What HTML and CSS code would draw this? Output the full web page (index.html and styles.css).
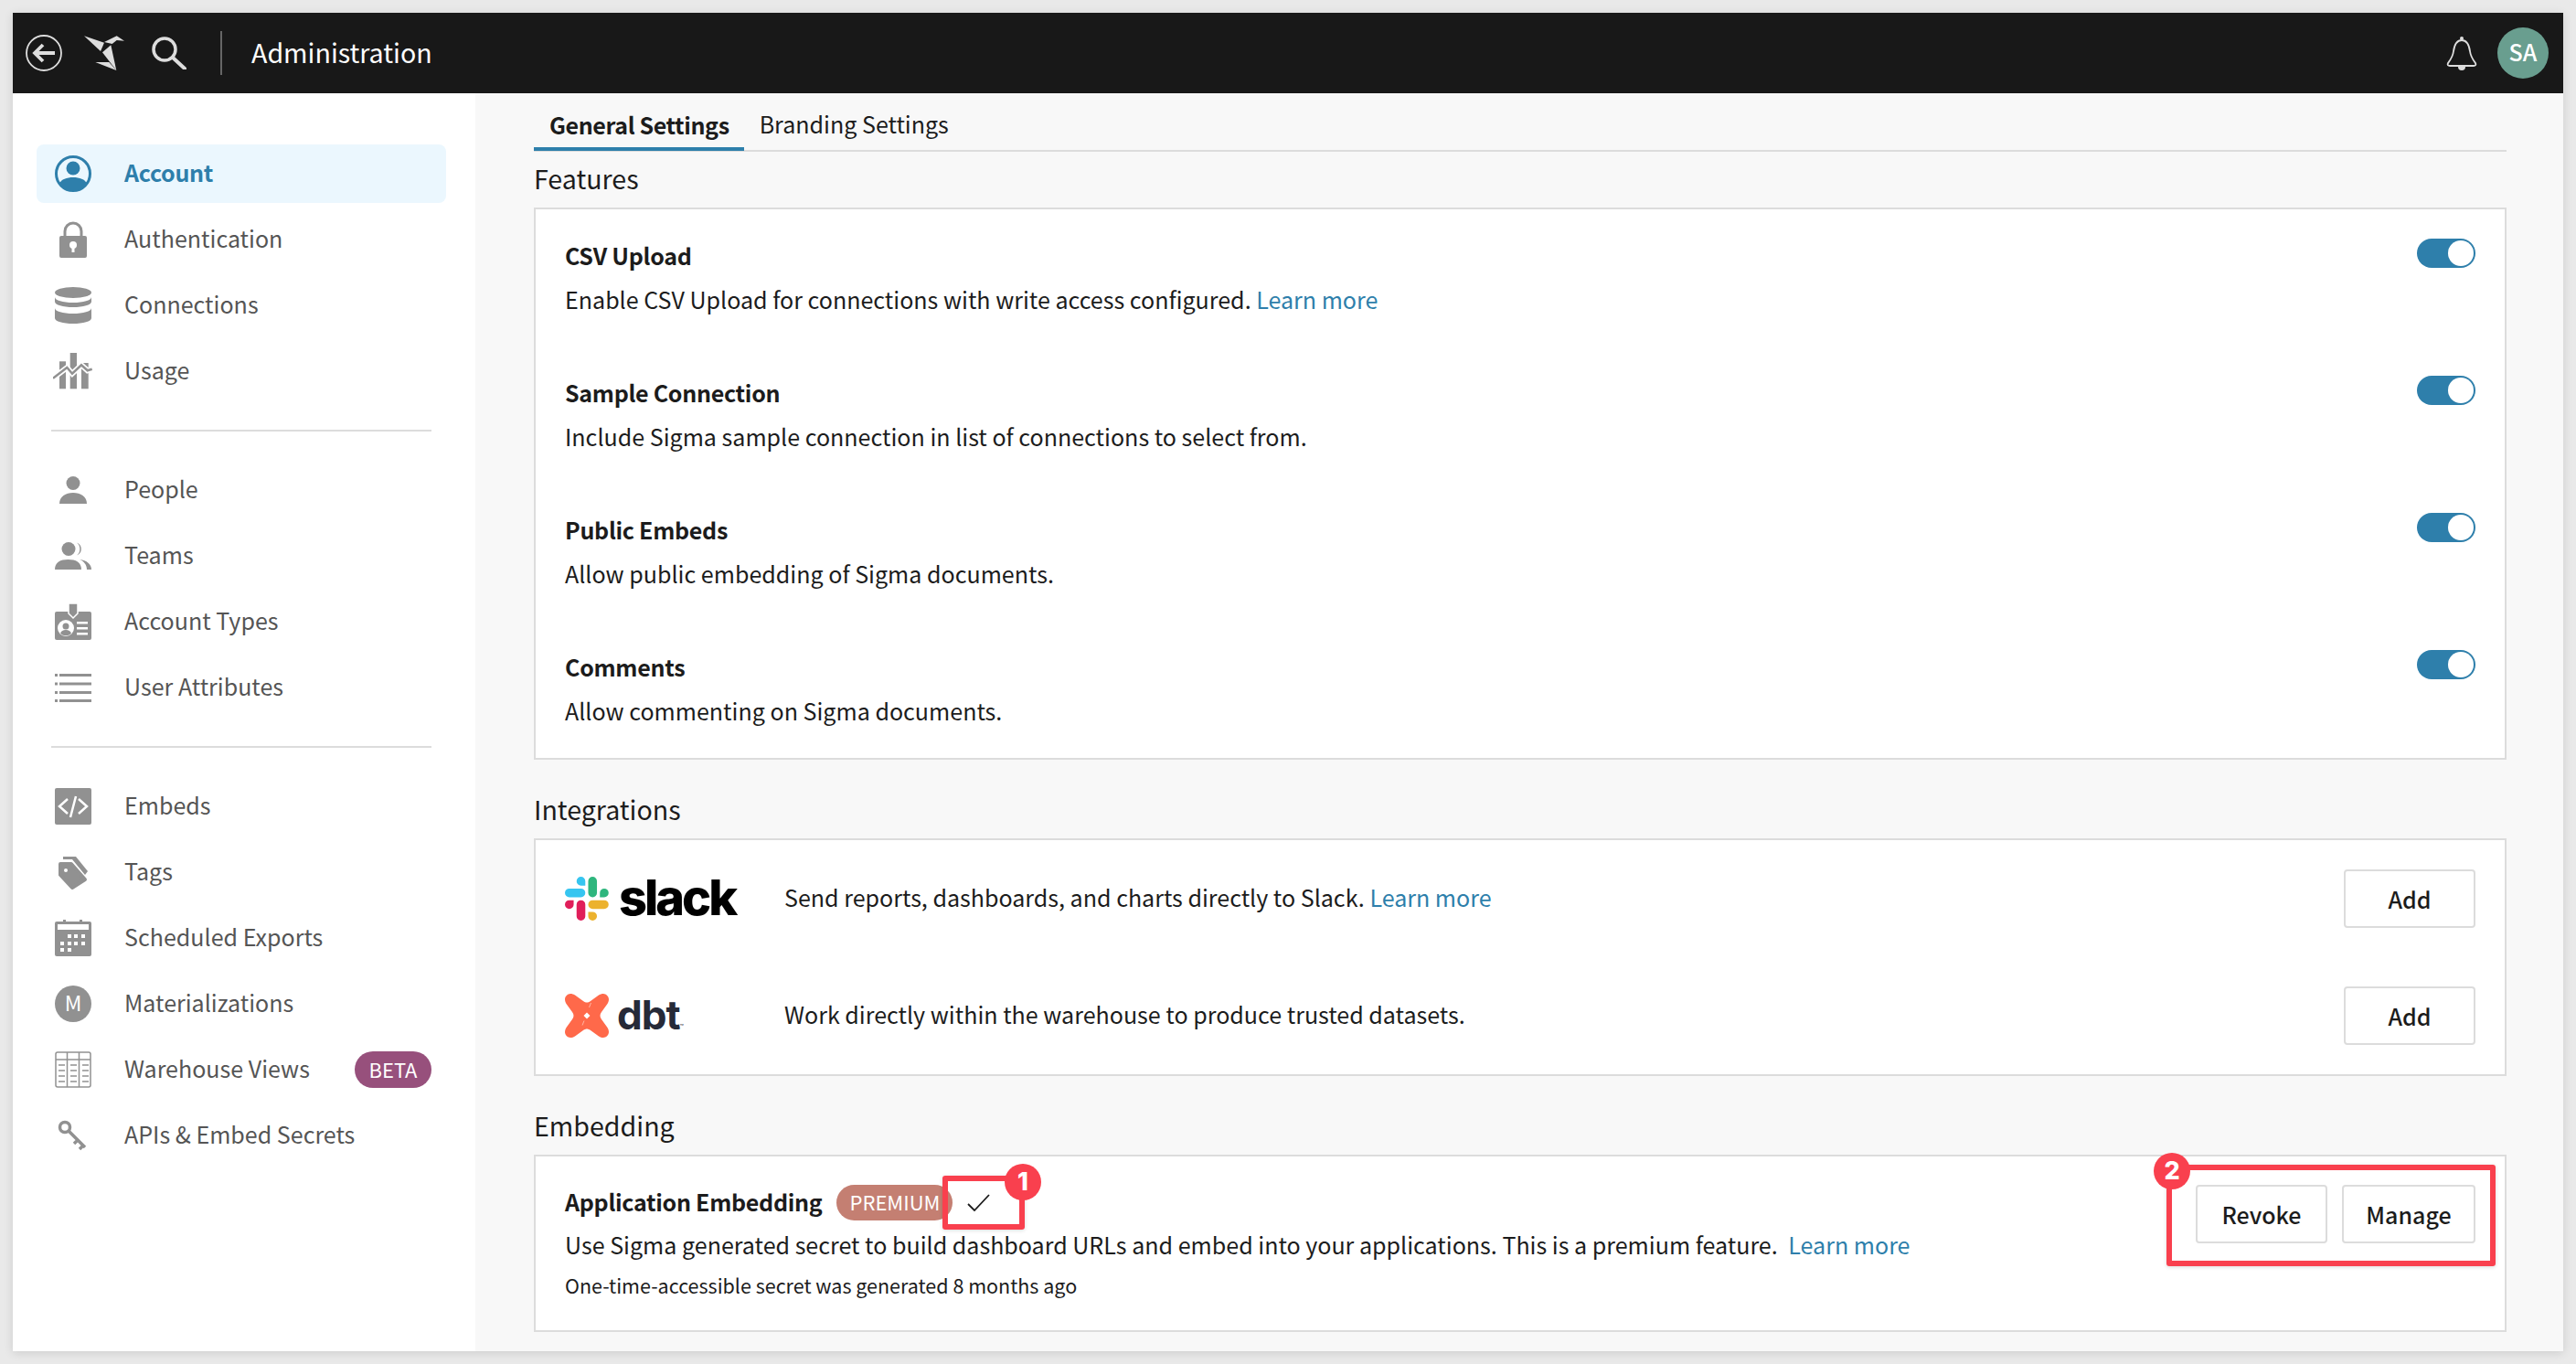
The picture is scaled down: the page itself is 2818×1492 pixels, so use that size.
FILE: index.html
```html
<!DOCTYPE html>
<html lang="en">
<head>
    <meta charset="UTF-8">
    <title>Administration</title>
    <link rel="stylesheet" href="styles.css">
</head>
<body>
<div class="window">
    <header class="topbar">
        <svg class="top-back" viewBox="0 0 40 40"><circle cx="20" cy="20" r="19" fill="none" stroke="#ddd" stroke-width="1.800"/><path d="M32 20H10M19 11l-9 9 9 9" fill="none" stroke="#ddd" stroke-width="3.800"/></svg>
        <svg class="top-logo" viewBox="0 0 44 38"><path d="M0 .3L22 7.700 18 17z" fill="#ddd"/><path d="M20 18.300L29.300 10.300 35.300 38z" fill="#ddd"/><path d="M22 7L35.700 .3 44 5.700 35.700 5 30.700 9z" fill="#ddd"/><path d="M12.300 29L27.300 29 35.300 38z" fill="#ddd"/></svg>
        <svg class="top-search" viewBox="0 0 38 36"><circle cx="14" cy="14" r="12" fill="none" stroke="#ddd" stroke-width="3.500"/><path d="M23 23l13 12" stroke="#ddd" stroke-width="4" stroke-linecap="round"/></svg>
        <span class="top-sep"></span>
        <span class="top-title">Administration</span>
        <svg class="top-bell" viewBox="0 0 34 40"><path d="M17 6c-6 0-8 5-9 12-.7 6-3 9-6 13-1 2 0 3 2 3h26c2 0 3-1 2-3-3-4-5.300-7-6-13-1-7-3-12-9-12z" fill="none" stroke="#ddd" stroke-width="1.800"/><circle cx="17" cy="4" r="2" fill="#ddd"/><path d="M13 35h8a4 4 0 0 1-8 0z" fill="#ddd"/></svg>
        <span class="avatar">SA</span>
    </header>
    <div class="content">
        <aside class="sidebar">
            <nav class="nav-group">
                <a class="nav-item active">
                    <svg class="nav-icon" viewBox="0 0 40 40"><circle cx="20" cy="20" r="18.500" fill="none" stroke="#2e7fab" stroke-width="3"/><circle cx="20" cy="14" r="7.500"/><path d="M5 31c2-5 8-7 15-7s13 2 15 7a19 19 0 0 1-30 0z"/></svg>
                    <span class="nav-label">Account</span>
                </a>
                <a class="nav-item">
                    <svg class="nav-icon" viewBox="0 0 40 40"><path d="M11 18v-7a9 9 0 0 1 18 0v7" fill="none" stroke="#919191" stroke-width="3"/><rect x="5" y="16" width="30" height="24" rx="2"/><circle cx="20" cy="26" r="4" fill="#fff"/><rect x="18.500" y="27" width="3" height="7" fill="#fff"/></svg>
                    <span class="nav-label">Authentication</span>
                </a>
                <a class="nav-item">
                    <svg class="nav-icon" viewBox="0 0 40 40"><ellipse cx="20" cy="6" rx="20" ry="6"/><path d="M0 11v5c0 3.500 9 6 20 6s20-2.500 20-6v-5c0 3.500-9 6-20 6S0 14.500 0 11z"/><path d="M0 23v11c0 3.500 9 6 20 6s20-2.500 20-6V23c0 3.500-9 6-20 6S0 26.500 0 23z"/></svg>
                    <span class="nav-label">Connections</span>
                </a>
                <a class="nav-item">
                    <svg class="nav-icon wide" viewBox="0 0 44 40"><rect x="7" y="9.300" width="7" height="30"/><rect x="18.700" width="7.300" height="39.300"/><rect x="31" y="11" width="7.700" height="28.300"/><path d="M0 27.700L15.300 16 21 22.700 31 13.300 37.700 19.300 42.700 17.700" fill="none" stroke="#fff" stroke-width="6"/><path d="M0 27.700L15.300 16 21 22.700 31 13.300 37.700 19.300 42.700 17.700" fill="none" stroke="#919191" stroke-width="2.500"/></svg>
                    <span class="nav-label">Usage</span>
                </a>
            </nav>
            <div class="nav-divider"></div>
            <nav class="nav-group">
                <a class="nav-item">
                    <svg class="nav-icon" viewBox="0 0 40 40"><circle cx="20" cy="12.500" r="7.500"/><path d="M5 35c0-8 7-12 15-12s15 4 15 12z"/></svg>
                    <span class="nav-label">People</span>
                </a>
                <a class="nav-item">
                    <svg class="nav-icon" viewBox="0 0 40 40"><circle cx="15" cy="12.500" r="7.500"/><path d="M0 35c0-8 6-11 14.500-11S29 27 29 35z"/><path d="M24 5.500a7.500 7.500 0 0 1 0 14 9 9 0 0 0 0-14z"/><path d="M27 24c8 1 13 5 13 11h-5c0-5-3-9-8-11z"/></svg>
                    <span class="nav-label">Teams</span>
                </a>
                <a class="nav-item">
                    <svg class="nav-icon" viewBox="0 0 40 40"><rect y="9" width="40" height="31" rx="2"/><path d="M15 0h10v11l-5 5-5-5z" stroke="#fff" stroke-width="1.500"/><circle cx="12" cy="27" r="9" fill="#fff"/><circle cx="12" cy="25" r="3.500"/><path d="M6 33c1-3 3-4 6-4s5 1 6 4a9 9 0 0 1-12 0z"/><rect x="24" y="20" width="12" height="2.500" fill="#fff"/><rect x="24" y="26" width="12" height="2.500" fill="#fff"/><rect x="24" y="32" width="12" height="2.500" fill="#fff"/></svg>
                    <span class="nav-label">Account Types</span>
                </a>
                <a class="nav-item">
                    <svg class="nav-icon" viewBox="0 0 40 40"><rect y="5" width="3" height="3"/><rect x="5" y="5" width="35" height="3"/><rect y="14.500" width="3" height="3"/><rect x="5" y="14.500" width="35" height="3"/><rect y="24" width="3" height="3"/><rect x="5" y="24" width="35" height="3"/><rect y="33" width="3" height="3"/><rect x="5" y="33" width="35" height="3"/></svg>
                    <span class="nav-label">User Attributes</span>
                </a>
            </nav>
            <div class="nav-divider"></div>
            <nav class="nav-group">
                <a class="nav-item">
                    <svg class="nav-icon" viewBox="0 0 40 40"><rect width="40" height="40" rx="2"/><path d="M14 12l-9 8 9 8M26 12l9 8-9 8M23 9l-6 23" fill="none" stroke="#fff" stroke-width="2.500"/></svg>
                    <span class="nav-label">Embeds</span>
                </a>
                <a class="nav-item">
                    <svg class="nav-icon" viewBox="0 0 40 40"><path d="M6 11h12l15 17-14 9L6 23z" stroke="#919191" stroke-width="4" stroke-linejoin="round"/><path d="M9 3h14l13 16-3 4-14-17H9z"/><circle cx="12" cy="18" r="2" fill="#fff"/></svg>
                    <span class="nav-label">Tags</span>
                </a>
                <a class="nav-item">
                    <svg class="nav-icon" viewBox="0 0 40 40"><rect x="9" width="3" height="4"/><rect x="27" width="3" height="4"/><rect y="2" width="40" height="38" rx="2"/><rect x="3" y="5" width="34" height="6" fill="#fff"/><g fill="#fff"><rect x="14" y="16" width="4" height="4"/><rect x="21" y="16" width="4" height="4"/><rect x="29" y="16" width="4" height="4"/><rect x="6" y="24" width="4" height="4"/><rect x="14" y="24" width="4" height="4"/><rect x="21" y="24" width="4" height="4"/><rect x="29" y="24" width="4" height="4"/><rect x="6" y="31" width="4" height="4"/><rect x="14" y="31" width="4" height="4"/></g></svg>
                    <span class="nav-label">Scheduled Exports</span>
                </a>
                <a class="nav-item">
                    <svg class="nav-icon" viewBox="0 0 40 40"><circle cx="20" cy="20" r="20"/><text x="20" y="28" class="icon-m" text-anchor="middle">M</text></svg>
                    <span class="nav-label">Materializations</span>
                </a>
                <a class="nav-item">
                    <svg class="nav-icon" viewBox="0 0 40 40"><rect x="1" y="1" width="38" height="38" rx="2" fill="none" stroke="#919191" stroke-width="1.500"/><path d="M1 9h38M13.500 1v38M26.500 1v38" fill="none" stroke="#919191" stroke-width="1.500"/><path d="M4 15h7M17 15h7M30 15h7M4 21h7M17 21h7M30 21h7M4 27h7M17 27h7M30 27h7M4 33h7M17 33h7M30 33h7" fill="none" stroke="#919191" stroke-width="1.500"/></svg>
                    <span class="nav-label">Warehouse Views</span>
                    <span class="beta">BETA</span>
                </a>
                <a class="nav-item">
                    <svg class="nav-icon" viewBox="0 0 40 40"><circle cx="11" cy="11" r="5.500" fill="none" stroke="#919191" stroke-width="3.500"/><path d="M15 15l18 18M25 25l-4 4M31 31l-4 4" fill="none" stroke="#919191" stroke-width="3.500"/></svg>
                    <span class="nav-label">APIs &amp; Embed Secrets</span>
                </a>
            </nav>
        </aside>

        <main class="main">
            <div class="tabs">
                <span class="tab current">General Settings</span>
                <span class="tab">Branding Settings</span>
            </div>

            <h2 class="section-title">Features</h2>
            <section class="card features">
                <div class="feature">
                    <div>
                        <div class="feature-name">CSV Upload</div>
                        <div class="feature-desc">Enable CSV Upload for connections with write access configured. <a class="link">Learn more</a></div>
                    </div>
                    <span class="toggle"></span>
                </div>
                <div class="feature">
                    <div>
                        <div class="feature-name">Sample Connection</div>
                        <div class="feature-desc">Include Sigma sample connection in list of connections to select from.</div>
                    </div>
                    <span class="toggle"></span>
                </div>
                <div class="feature">
                    <div>
                        <div class="feature-name">Public Embeds</div>
                        <div class="feature-desc">Allow public embedding of Sigma documents.</div>
                    </div>
                    <span class="toggle"></span>
                </div>
                <div class="feature">
                    <div>
                        <div class="feature-name">Comments</div>
                        <div class="feature-desc">Allow commenting on Sigma documents.</div>
                    </div>
                    <span class="toggle"></span>
                </div>
            </section>

            <h2 class="section-title spaced">Integrations</h2>
            <section class="card integrations">
                <div class="integration">
                    <div class="brand">
                        <svg class="brand-mark" viewBox="0 0 54 54">
                            <path d="M19.712.133a5.381 5.381 0 0 0-5.376 5.387 5.381 5.381 0 0 0 5.376 5.386h5.376V5.520A5.381 5.381 0 0 0 19.712.133m0 14.365H5.376A5.381 5.381 0 0 0 0 19.884a5.381 5.381 0 0 0 5.376 5.387h14.336a5.381 5.381 0 0 0 5.376-5.387 5.381 5.381 0 0 0-5.376-5.386" fill="#36C5F0"/>
                            <path d="M53.760 19.884a5.381 5.381 0 0 0-5.376-5.386 5.381 5.381 0 0 0-5.376 5.386v5.387h5.376a5.381 5.381 0 0 0 5.376-5.387m-14.336 0V5.520A5.381 5.381 0 0 0 34.048.133a5.381 5.381 0 0 0-5.376 5.387v14.364a5.381 5.381 0 0 0 5.376 5.387 5.381 5.381 0 0 0 5.376-5.387" fill="#2EB67D"/>
                            <path d="M34.048 54a5.381 5.381 0 0 0 5.376-5.387 5.381 5.381 0 0 0-5.376-5.386h-5.376v5.386A5.381 5.381 0 0 0 34.048 54m0-14.365h14.336a5.381 5.381 0 0 0 5.376-5.386 5.381 5.381 0 0 0-5.376-5.387H34.048a5.381 5.381 0 0 0-5.376 5.387 5.381 5.381 0 0 0 5.376 5.386" fill="#ECB22E"/>
                            <path d="M0 34.249a5.381 5.381 0 0 0 5.376 5.386 5.381 5.381 0 0 0 5.376-5.386v-5.387H5.376A5.381 5.381 0 0 0 0 34.250m14.336-.001v14.364A5.381 5.381 0 0 0 19.712 54a5.381 5.381 0 0 0 5.376-5.387V34.250a5.381 5.381 0 0 0-5.376-5.387 5.381 5.381 0 0 0-5.376 5.387" fill="#E01E5A"/>
                        </svg>
                        <span class="slack-word">slack</span>
                    </div>
                    <div class="integration-desc">Send reports, dashboards, and charts directly to Slack. <a class="link">Learn more</a></div>
                    <button class="btn">Add</button>
                </div>
                <div class="integration">
                    <div class="brand">
                        <svg class="brand-mark" viewBox="0 0 48 48">
                            <path d="M6 0c2 0 3 .5 5 1.500l9 6.500c3 2 5 2 8 0l9-6.500c2-1 3-1.500 5-1.500 3 0 6 3 6 6 0 2-.5 3-1.500 5l-6.500 9c-2 3-2 5 0 8l6.500 9c1 2 1.500 3 1.500 5 0 3-3 6-6 6-2 0-3-.5-5-1.500l-9-6.500c-3-2-5-2-8 0l-9 6.500c-2 1-3 1.500-5 1.500-3 0-6-3-6-6 0-2 .5-3 1.500-5l6.500-9c2-3 2-5 0-8l-6.500-9C.5 9 0 8 0 6c0-3 3-6 6-6z" fill="#ff694a"/>
                            <path d="M24 20.500l3.500 3.500-3.500 3.500-3.500-3.500z" fill="#fff"/>
                            <path d="M28.500 10l-2 5M19 34.500l2-5" stroke="#ffb5a3" stroke-width="1"/>
                        </svg>
                        <span class="dbt-word">dbt<sup>™</sup></span>
                    </div>
                    <div class="integration-desc">Work directly within the warehouse to produce trusted datasets.</div>
                    <button class="btn">Add</button>
                </div>
            </section>

            <h2 class="section-title spaced">Embedding</h2>
            <section class="card embedding">
                <div class="embed-info">
                    <div class="embed-head">
                        <span class="feature-name">Application Embedding</span>
                        <span class="premium">PREMIUM</span>
                        <svg class="check" viewBox="0 0 25 19"><path d="M1 11l7 7L24 1" fill="none" stroke="#1c1c1c" stroke-width="1.800"/></svg>
                    </div>
                    <div class="feature-desc">Use Sigma generated secret to build dashboard URLs and embed into your applications. This is a premium feature. <a class="link learn-gap">Learn more</a></div>
                    <div class="embed-note">One-time-accessible secret was generated 8 months ago</div>
                </div>
                <div class="embed-actions">
                    <button class="btn revoke">Revoke</button>
                    <button class="btn manage">Manage</button>
                </div>
                <span class="mark-box box-one"></span>
                <span class="mark-num num-one">1</span>
                <span class="mark-box box-two"></span>
                <span class="mark-num num-two">2</span>
            </section>
        </main>
    </div>
</div>
</body>
</html>
```

FILE: styles.css
```css
* {
    box-sizing: border-box;
}

html, body {
    height: 100%;
}

body {
    margin: 0;
    padding: 14px;
    background: #e9e9e9;
    font-family: "Noto Sans CJK SC", "Noto Sans", sans-serif;
    font-size: 25.050px;
    color: #1c1c1c;
    overflow: hidden;
}

.window {
    height: 1464px;
    display: flex;
    flex-direction: column;
    box-shadow: 0 2px 10px rgba(0, 0, 0, 0.12);
}

/* top bar */
.topbar {
    height: 88px;
    flex: none;
    display: flex;
    align-items: center;
    background: #181818;
    padding: 0 16px 0 14px;
}

.top-back {
    width: 40px;
    height: 40px;
}

.top-logo {
    width: 44px;
    height: 38px;
    margin-left: 24px;
}

.top-search {
    width: 38px;
    height: 36px;
    margin-left: 30px;
}

.top-sep {
    width: 2px;
    height: 48px;
    background: #666;
    margin-left: 37px;
}

.top-title {
    margin-left: 32px;
    padding-bottom: 3px;
    font-size: 28.600px;
    line-height: 40px;
    color: #fff;
}

.top-bell {
    width: 34px;
    height: 40px;
    margin-left: auto;
}

.avatar {
    width: 56px;
    height: 56px;
    margin-left: 22px;
    border-radius: 50%;
    background: #699e8f;
    color: #fff;
    font-size: 25px;
    font-weight: 500;
    line-height: 53px;
    text-align: center;
}

.content {
    flex: 1;
    display: flex;
    min-height: 0;
}

/* sidebar */
.sidebar {
    width: 506px;
    flex: none;
    background: #fff;
    padding: 56px 32px 0 26px;
}

.nav-group {
    display: flex;
    flex-direction: column;
    gap: 8px;
}

.nav-item {
    height: 64px;
    display: flex;
    align-items: center;
    padding-left: 20px;
    border-radius: 8px;
    color: #555;
    line-height: 40px;
}

.nav-item.active {
    background: #ebf7fe;
    color: #2e7fab;
    font-weight: 700;
    letter-spacing: -0.300px;
}

.nav-label {
    padding-bottom: 4px;
}

.nav-icon {
    width: 40px;
    height: 40px;
    flex: none;
    margin-right: 36px;
    fill: #919191;
}

.nav-icon.wide {
    width: 44px;
    margin-left: -2px;
    margin-right: 34px;
}

.active .nav-icon {
    fill: #2e7fab;
}

.icon-m {
    font-size: 23px;
    fill: #fff;
}

.nav-divider {
    height: 2px;
    margin: 32px 16px;
    background: #dcdcdc;
}

.beta {
    width: 84px;
    height: 40px;
    margin-left: auto;
    margin-right: 16px;
    border-radius: 20px;
    background: #97507c;
    color: #fff;
    font-size: 22px;
    line-height: 38px;
    text-align: center;
}

/* main area */
.main {
    flex: 1;
    min-width: 0;
    background: #f8f8f8;
    padding: 0 62px 0 64px;
}

.tabs {
    height: 64px;
    display: flex;
    align-items: flex-end;
    border-bottom: 2px solid #dcdcdc;
}

.tab {
    height: 62px;
    padding: 13px 17px 0;
    line-height: 40px;
}

.tab.current {
    padding-right: 16px;
    font-weight: 700;
    letter-spacing: -0.400px;
    border-bottom: 4px solid #2e7fab;
    margin-bottom: -1px;
}

.section-title {
    height: 61px;
    margin: 0;
    font-size: 28.600px;
    font-weight: 400;
    line-height: 57px;
}

.section-title.spaced {
    margin-top: 25px;
}

.card {
    background: #fff;
    border: 2px solid #dcdcdc;
    padding: 27px 32px 26px 32px;
}

.features {
    display: flex;
    flex-direction: column;
    gap: 53px;
}

.feature {
    display: flex;
    justify-content: space-between;
    align-items: flex-start;
}

.feature-name {
    font-weight: 700;
    letter-spacing: -0.300px;
    line-height: 46px;
}

.feature-desc {
    line-height: 51px;
}

.link {
    color: #2e7fab;
}

.toggle {
    width: 64px;
    height: 32px;
    margin-top: 5px;
    border-radius: 16px;
    background: #2e7fab;
    display: flex;
    justify-content: flex-end;
    padding: 2px;
}

.toggle::before {
    content: "";
    width: 28px;
    height: 28px;
    border-radius: 50%;
    background: #fff;
}

/* integrations */
.integrations {
    display: flex;
    flex-direction: column;
    gap: 64px;
    padding-top: 32px;
    padding-bottom: 32px;
}

.integration {
    height: 64px;
    display: flex;
    align-items: center;
}

.brand {
    width: 240px;
    flex: none;
    display: flex;
    align-items: center;
}

.brand-mark {
    width: 48px;
    height: 48px;
    flex: none;
}

.slack-word {
    margin-left: 11px;
    padding-bottom: 2px;
    font-family: Inter, sans-serif;
    font-size: 54px;
    font-weight: 800;
    letter-spacing: -3px;
    line-height: 48px;
    color: #000;
}

.dbt-word {
    margin-left: 9px;
    padding-top: 12px;
    font-family: Inter, sans-serif;
    font-size: 44px;
    font-weight: 700;
    letter-spacing: -1px;
    line-height: 48px;
    color: #262a38;
}

.dbt-word sup {
    font-size: 7px;
    font-weight: 400;
    letter-spacing: 0;
    vertical-align: baseline;
}

.integration-desc {
    flex: 1;
    padding-bottom: 4px;
}

.btn {
    height: 64px;
    padding: 0;
    background: #fff;
    border: 2px solid #dcdcdc;
    border-radius: 4px;
    font-family: inherit;
    font-size: 25px;
    font-weight: 500;
    color: #1c1c1c;
    width: 144px;
}

/* embedding */
.embedding {
    position: relative;
    display: flex;
    justify-content: space-between;
    align-items: flex-start;
    height: 194px;
    padding-top: 25px;
}

.embedding .feature-desc {
    line-height: 49px;
}

.embed-head {
    display: flex;
    align-items: center;
    height: 47px;
}

.premium {
    width: 127px;
    height: 39px;
    margin-left: 16px;
    margin-top: 3px;
    border-radius: 20px;
    background: #c47f72;
    color: #fff;
    font-size: 22px;
    line-height: 37px;
    text-align: center;
}

.check {
    width: 25px;
    height: 19px;
    margin-left: 16px;
    margin-top: 3px;
}

.embed-note {
    font-size: 21.500px;
    line-height: 40px;
}

.learn-gap {
    margin-left: 6px;
}

.embed-actions {
    display: flex;
    gap: 16px;
    margin-top: 6px;
}

.manage {
    width: 146px;
}

/* red callouts drawn over the screenshot */
.mark-box {
    position: absolute;
    border: 6px solid #f9404e;
    border-radius: 3px;
    box-shadow: 0 1px 4px rgba(0, 0, 0, 0.15);
}

.box-one {
    left: 445px;
    top: 21px;
    width: 90px;
    height: 59px;
}

.box-two {
    left: 1784px;
    top: 9px;
    width: 360px;
    height: 111px;
}

.mark-num {
    position: absolute;
    width: 40px;
    height: 40px;
    border-radius: 50%;
    background: #f9404e;
    color: #fff;
    font-family: Inter, sans-serif;
    font-size: 27px;
    font-weight: 800;
    line-height: 40px;
    text-align: center;
}

.num-one {
    left: 513px;
    top: 8px;
}

.num-two {
    left: 1770px;
    top: -4px;
}
```
